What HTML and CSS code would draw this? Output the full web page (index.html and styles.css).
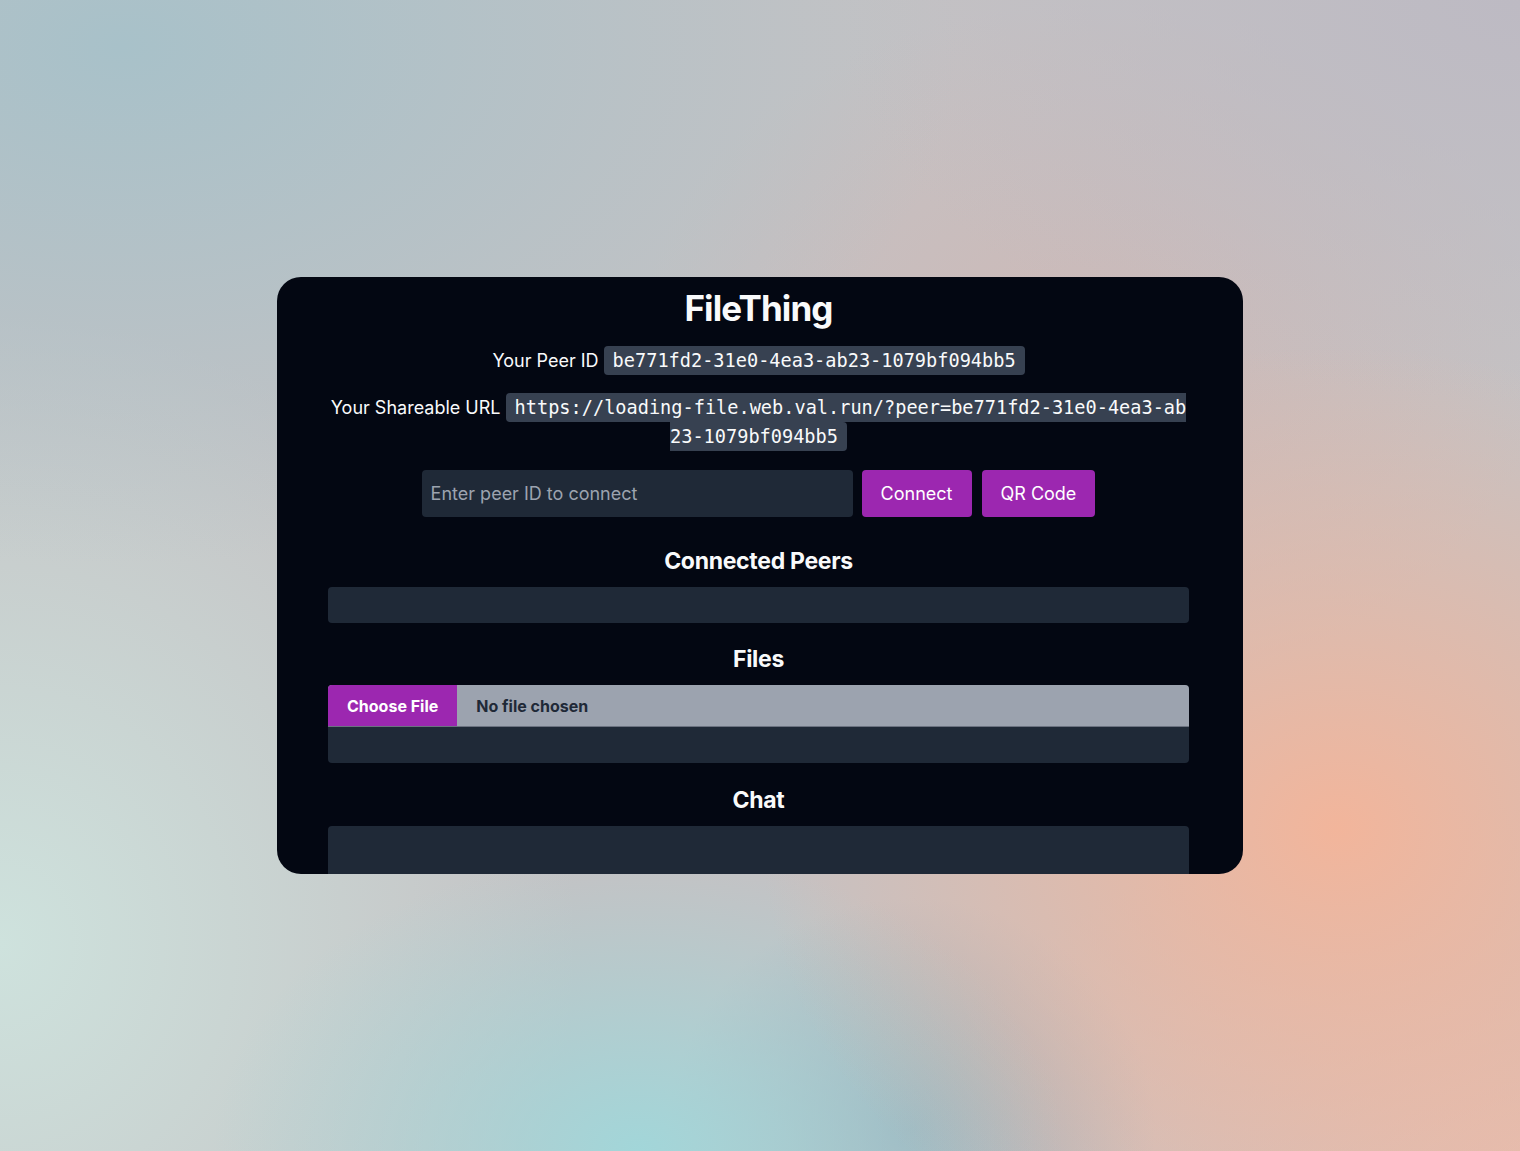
FILE: index.html
```html
<!DOCTYPE html>
<html lang="en">
<head>
  <meta charset="UTF-8">
  <meta name="viewport" content="width=device-width, initial-scale=1.0">
  <title>FileThing</title>
  <link rel="stylesheet" href="styles.css">
</head>
<body>
  <main class="card">
    <h1>FileThing</h1>

    <p class="info">Your Peer ID <code>be771fd2-31e0-4ea3-ab23-1079bf094bb5</code></p>
    <p class="info info-url">Your Shareable URL <code>https://loading-file.web.val.run/?peer=be771fd2-31e0-4ea3-ab23-1079bf094bb5</code></p>

    <div class="connect-row">
      <input type="text" class="peer-input" placeholder="Enter peer ID to connect">
      <button class="btn">Connect</button>
      <button class="btn">QR Code</button>
    </div>

    <h2>Connected Peers</h2>
    <div class="panel peers"></div>

    <h2>Files</h2>
    <div class="panel files">
      <input type="file" class="file-input">
      <div class="file-list"></div>
    </div>

    <h2>Chat</h2>
    <div class="panel chat"></div>
  </main>
</body>
</html>
```

FILE: styles.css
```css
:root {
  --card: #030712;
  --panel: #1f2937;
  --code: #374151;
  --accent: #9c27b0;
  --muted: #9ca3af;
  --text: #f9fafb;
}

* {
  box-sizing: border-box;
}

body {
  margin: 0;
  height: 100vh;
  display: flex;
  align-items: center;
  justify-content: center;
  font-family: Inter, "Noto Sans", sans-serif;
  color: var(--text);
  background:
    radial-gradient(ellipse 38% 42% at 88% 72%, #f2b59b 0%, rgba(242,181,155,0) 100%),
    radial-gradient(ellipse 28% 26% at 42% 100%, #a2d6d9 0%, rgba(162,214,217,0) 100%),
    radial-gradient(ellipse 16% 20% at 60% 98%, #9eafba 0%, rgba(158,175,186,0) 100%),
    radial-gradient(ellipse 55% 45% at 8% 4%, #a8c1c9 0%, rgba(168,193,201,0) 100%),
    radial-gradient(ellipse 38% 55% at 0% 82%, #cee2dd 0%, rgba(206,226,221,0) 100%),
    radial-gradient(ellipse 45% 35% at 100% 0%, #bdbac3 0%, rgba(189,186,195,0) 100%),
    radial-gradient(ellipse 30% 30% at 72% 30%, #cdb9b7 0%, rgba(205,185,183,0) 100%),
    radial-gradient(ellipse 40% 30% at 100% 100%, #e2beb2 0%, rgba(226,190,178,0) 100%),
    #c4c2c4;
}

.card {
  width: 966px;
  height: 597px;
  padding: 11px 54px 0 51px;
  background-color: var(--card);
  border-radius: 24px;
  overflow: hidden;
}

h1 {
  margin: 0;
  font-size: 35px;
  line-height: 40px;
  font-weight: 700;
  text-align: center;
  letter-spacing: -0.9px;
}

.info {
  margin: 18px 0 0;
  font-size: 18px;
  line-height: 29px;
  text-align: center;
}

code {
  font-family: "DejaVu Sans Mono", "Liberation Mono", monospace;
  font-size: 18.6px;
  background-color: var(--code);
  padding: 4px 9px;
  border-radius: 4px;
  word-break: break-all;
}

.connect-row {
  display: flex;
  justify-content: center;
  gap: 9px;
  margin-top: 19px;
  height: 47px;
}

.peer-input {
  width: 431px;
  padding: 0 9px;
  border: none;
  border-radius: 4px;
  background-color: var(--panel);
  color: var(--text);
  font-family: inherit;
  font-size: 18px;
}

.peer-input::placeholder {
  color: var(--muted);
}

.btn {
  padding: 0 19px;
  border: none;
  border-radius: 4px;
  background-color: var(--accent);
  color: white;
  font-family: inherit;
  font-size: 18px;
  cursor: pointer;
}

.btn + .btn {
  margin-left: 1px;
}

h2 {
  margin: 0;
  font-size: 23px;
  line-height: 32px;
  font-weight: 700;
  text-align: center;
  letter-spacing: -0.3px;
}

.connect-row + h2 {
  margin-top: 28px;
}

.panel {
  margin-top: 10px;
  background-color: var(--panel);
  border-radius: 4px;
}

.peers {
  height: 36px;
  margin-bottom: 20px;
}

.files {
  margin-bottom: 21px;
}

.file-input {
  display: block;
  width: 100%;
  height: 42px;
  background-color: var(--muted);
  border-bottom: 1px solid #6b7280;
  border-radius: 4px 4px 0 0;
  color: #1f2937;
  font-family: inherit;
  font-size: 16px;
  font-weight: 700;
  overflow: hidden;
}

.file-input::file-selector-button {
  height: 42px;
  margin-right: 19px;
  padding: 0 19px;
  border: none;
  background-color: var(--accent);
  color: white;
  font-family: inherit;
  font-size: 16px;
  font-weight: 700;
}

.file-list {
  height: 36px;
}

.chat {
  height: 120px;
}
```
